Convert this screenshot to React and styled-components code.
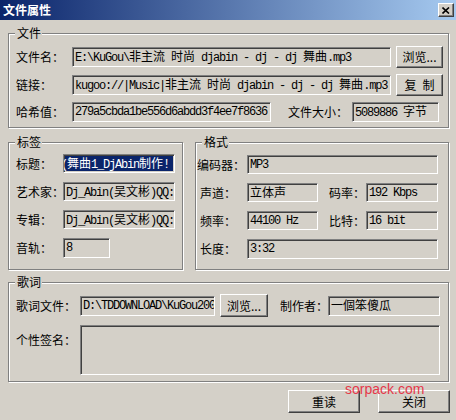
import React from 'react';
import styled, { createGlobalStyle } from 'styled-components';

const GlobalStyle = createGlobalStyle`
  html, body { margin: 0; padding: 0; background: #d4d0c8; }
  * { box-sizing: border-box; }
`;

const Window = styled.div`
  position: relative;
  width: 456px;
  height: 420px;
  overflow: hidden;
  background: #d4d0c8;
  display: flex;
  flex-direction: column;
  font-family: "Noto Sans CJK SC", "Liberation Sans", sans-serif;
  font-size: 12px;
  color: #000;
`;

const TitleBar = styled.div`
  flex: none;
  height: 20px;
  display: flex;
  align-items: center;
  justify-content: space-between;
  padding: 0 2px 0 3px;
  background: linear-gradient(to right, #0a246a, #a6caf0);
  color: #fff;
  font-weight: bold;
  font-size: 12px;
  line-height: 20px;
`;

const CloseBtn = styled.div`
  width: 16px;
  height: 14px;
  background: #d4d0c8;
  border-top: 1px solid #fff;
  border-left: 1px solid #fff;
  border-right: 1px solid #404040;
  border-bottom: 1px solid #404040;
  box-shadow: inset -1px -1px #808080;
  display: flex;
  align-items: center;
  justify-content: center;
`;

const Content = styled.div`
  flex: 1;
  display: flex;
  flex-direction: column;
  padding: 13px 7px 0 8px;
`;

const Group = styled.div`
  position: relative;
  width: ${(p) => p.$w || '100%'};
  height: ${(p) => p.$h}px;
  margin-top: ${(p) => p.$mt || 0}px;
  flex: none;
  border: 1px solid #808080;
  box-shadow: inset 1px 1px #fff, 1px 1px #fff;
  padding: ${(p) => p.$pad};
  display: flex;
  flex-direction: column;
  gap: ${(p) => p.$gap || 0}px;
`;

const Legend = styled.span`
  position: absolute;
  top: -8px;
  left: 6px;
  padding: 0 1px 0 2px;
  background: #d4d0c8;
  line-height: 14px;
  font-size: 12px;
`;

const MiddleRow = styled.div`
  display: flex;
  gap: 12px;
  margin-top: 14px;
`;

const Row = styled.div`
  display: flex;
  align-items: ${(p) => p.$align || 'center'};
  height: ${(p) => (p.$h ? `${p.$h}px` : 'auto')};
`;

const Label = styled.div`
  flex: none;
  width: ${(p) => p.$w}px;
  margin-left: ${(p) => p.$ml || 0}px;
  padding-left: ${(p) => p.$pl || 0}px;
  padding-top: ${(p) => p.$pt || 0}px;
  white-space: nowrap;
  line-height: 14px;
  font-size: 12px;
`;

const Field = styled.div`
  flex: none;
  width: ${(p) => p.$w}px;
  height: ${(p) => p.$h || 20}px;
  margin-left: ${(p) => p.$ml || 0}px;
  border-top: 1px solid #808080;
  border-left: 1px solid #808080;
  border-right: 1px solid #fff;
  border-bottom: 1px solid #fff;
  box-shadow: inset 1px 1px #404040, inset -1px -1px #d4d0c8;
  background: ${(p) => (p.$selected ? '#0a246a' : '#d4d0c8')};
  color: ${(p) => (p.$selected ? '#fff' : '#000')};
  padding: 0 0 0 2px;
  overflow: hidden;
  white-space: nowrap;
  display: flex;
  align-items: center;
  font-family: "Liberation Mono", "Noto Sans CJK SC", monospace;
  font-size: 12px;
  letter-spacing: -1.2px;
  line-height: 14px;
  text-indent: ${(p) => p.$indent || 0}px;
`;

const Cjk = styled.span`
  font-family: "Noto Sans CJK SC", sans-serif;
  letter-spacing: 0;
  font-size: 12px;
`;

const Button = styled.div`
  flex: none;
  width: ${(p) => p.$w}px;
  height: ${(p) => p.$h}px;
  margin-left: ${(p) => p.$ml || 0}px;
  background: #d4d0c8;
  border-top: 1px solid #fff;
  border-left: 1px solid #fff;
  border-right: 1px solid #404040;
  border-bottom: 1px solid #404040;
  box-shadow: inset -1px -1px #808080;
  display: flex;
  align-items: center;
  justify-content: center;
  font-size: 12px;
  line-height: 14px;
  white-space: pre;
`;

const Footer = styled.div`
  display: flex;
  justify-content: flex-end;
  gap: 18px;
  margin-top: 8px;
  margin-right: -1px;
`;

const Watermark = styled.div`
  position: absolute;
  left: 345px;
  top: 381px;
  font-family: "Liberation Sans", sans-serif;
  font-size: 14px;
  color: #e8283c;
  opacity: 0.9;
  pointer-events: none;
`;

const CJK_RE = /([\u2E80-\u9fff\uff00-\uffef]+)/;
const Mixed = ({ text }) =>
  text.split(CJK_RE).map((part, i) =>
    /[\u2E80-\u9fff\uff00-\uffef]/.test(part) ? <Cjk key={i}>{part}</Cjk> : part
  );

const Text = ({ children, ...rest }) => (
  <Field {...rest}>
    <span>
      <Mixed text={children} />
    </span>
  </Field>
);

export default function App() {
  return (
    <>
      <GlobalStyle />
      <Window>
        <TitleBar>
          <span>文件属性</span>
          <CloseBtn>
            <svg width="8" height="7" viewBox="0 0 8 7">
              <path d="M0.5 0.5 L7 6.5 M7 0.5 L0.5 6.5" stroke="#000" strokeWidth="1.6" />
            </svg>
          </CloseBtn>
        </TitleBar>
        <Content>
          <Group $h={95} $pad="12px 0 0 7px" $gap={6}>
            <Legend>文件</Legend>
            <Row $h={22}>
              <Label $w={56}>文件名：</Label>
              <Text $w={319}>{'E:\\KuGou\\非主流 时尚 djabin - dj - dj 舞曲.mp3'}</Text>
              <Button $w={47} $h={22} $ml={5}>浏览...</Button>
            </Row>
            <Row $h={22}>
              <Label $w={56}>链接：</Label>
              <Text $w={319}>{'kugoo://|Music|非主流 时尚 djabin - dj - dj 舞曲.mp3'}</Text>
              <Button $w={47} $h={22} $ml={5}>{'复\u2002制'}</Button>
            </Row>
            <Row $h={20}>
              <Label $w={56}>哈希值：</Label>
              <Text $w={199}>279a5cbda1be556d6abdd3f4ee7f8636</Text>
              <Label $w={64} $ml={17}>文件大小：</Label>
              <Text $w={87}>5089886 字节</Text>
            </Row>
          </Group>

          <MiddleRow>
            <Group $w="175px" $h={128} $pad="11px 0 0 7px" $gap={9}>
              <Legend>标签</Legend>
              <Row $h={19}>
                <Label $w={47}>标题：</Label>
                <Text $w={112} $h={19} $selected $indent={-5}>{'(舞曲1_DjAbin制作!'}</Text>
              </Row>
              <Row $h={19}>
                <Label $w={47}>艺术家：</Label>
                <Text $w={112} $h={19}>{'Dj_Abin(吴文彬)QQ:123456'}</Text>
              </Row>
              <Row $h={19}>
                <Label $w={47}>专辑：</Label>
                <Text $w={112} $h={19}>{'Dj_Abin(吴文彬)QQ:123456'}</Text>
              </Row>
              <Row $h={20}>
                <Label $w={47}>音轨：</Label>
                <Text $w={47} $h={20}>8</Text>
              </Row>
            </Group>

            <Group $w="254px" $h={128} $pad="12px 0 0 1px" $gap={9}>
              <Legend>格式</Legend>
              <Row $h={19}>
                <Label $w={50}>编码器：</Label>
                <Text $w={191} $h={19}>MP3</Text>
              </Row>
              <Row $h={19}>
                <Label $w={50} $pl={3}>声道：</Label>
                <Text $w={71} $h={19}>立体声</Text>
                <Label $w={37} $ml={11}>码率：</Label>
                <Text $w={72} $h={19}>192 Kbps</Text>
              </Row>
              <Row $h={19}>
                <Label $w={50} $pl={3}>频率：</Label>
                <Text $w={71} $h={19}>44100 Hz</Text>
                <Label $w={37} $ml={11}>比特：</Label>
                <Text $w={72} $h={19}>16 bit</Text>
              </Row>
              <Row $h={20}>
                <Label $w={50} $pl={3}>长度：</Label>
                <Text $w={191} $h={20}>3:32</Text>
              </Row>
            </Group>
          </MiddleRow>

          <Group $h={100} $mt={12} $pad="11px 0 0 7px" $gap={8}>
            <Legend>歌词</Legend>
            <Row $h={23}>
              <Label $w={64}>歌词文件：</Label>
              <Text $w={135}>{'D:\\TDDOWNLOAD\\KuGou2008\\Lyric'}</Text>
              <Button $w={48} $h={23} $ml={5}>浏览...</Button>
              <Label $w={48} $ml={12}>制作者：</Label>
              <Text $w={112}>一個笨傻瓜</Text>
            </Row>
            <Row $align="flex-start">
              <Label $w={64} $pt={8}>个性签名：</Label>
              <Field $w={360} $h={50} />
            </Row>
          </Group>

          <Footer>
            <Button $w={72} $h={23}>重读</Button>
            <Button $w={72} $h={23}>关闭</Button>
          </Footer>
        </Content>
        <Watermark>sorpack.com</Watermark>
      </Window>
    </>
  );
}
